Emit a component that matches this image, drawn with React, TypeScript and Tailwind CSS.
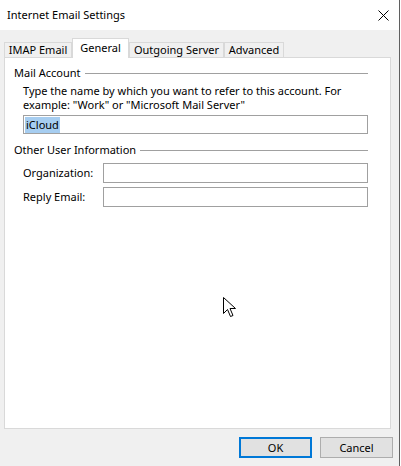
import React from "react";

const font = { fontFamily: '"Noto Sans", "Open Sans", sans-serif' };

function Tab({ label, width, active }: { label: string; width: string; active?: boolean }) {
  if (active) {
    return (
      <div
        className={`${width} h-[20px] -mb-px z-10 bg-white border border-b-0 border-[#d9d9d9] flex items-start justify-center pt-[1px] text-[11px] leading-[15px] text-black whitespace-nowrap`}
      >
        {label}
      </div>
    );
  }
  return (
    <div
      className={`${width} h-[15px] bg-[#f0f0f0] border border-b-0 border-[#d9d9d9] flex items-center justify-center text-[11px] leading-[14px] text-black whitespace-nowrap`}
    >
      {label}
    </div>
  );
}

function GroupHeader({ label }: { label: string }) {
  return (
    <div className="flex items-center h-[16px] pl-[9px] pr-[22px]">
      <span className="text-[11px] leading-[16px] text-black whitespace-nowrap">{label}</span>
      <div className="flex-1 ml-[4px] h-px bg-[#a0a0a0]" />
    </div>
  );
}

function Field({ label }: { label: string }) {
  return (
    <div className="flex items-center pl-[18px] pr-[22px]">
      <span className="w-[80px] text-[11px] leading-[14px] text-black whitespace-nowrap">{label}</span>
      <div className="flex-1 h-[20px] bg-white border border-[#a0a0a0]" />
    </div>
  );
}

export default function App() {
  return (
    <div className="w-[401px] h-[466px] flex bg-white overflow-hidden" style={font}>
      <div className="w-[399px] h-full flex flex-col bg-[#f0f0f0] relative">
        {/* title bar */}
        <div className="h-[30px] bg-white flex items-center justify-between pl-[7px] pr-[10px]">
          <span className="text-[11px] text-black whitespace-nowrap">Internet Email Settings</span>
          <svg width="11" height="11" viewBox="0 0 11 11">
            <path d="M0.5 0.5 L10.5 10.5 M10.5 0.5 L0.5 10.5" stroke="#000" strokeWidth="1" />
          </svg>
        </div>

        {/* tabs */}
        <div className="flex items-end pl-[4px] pt-[8px]">
          <Tab label="IMAP Email" width="w-[68px]" />
          <Tab label="General" width="w-[57px]" active />
          <Tab label="Outgoing Server" width="w-[95px]" />
          <Tab label="Advanced" width="w-[60px]" />
        </div>

        {/* panel */}
        <div className="ml-[4px] w-[387px] h-[372px] bg-white border border-[#d9d9d9] pt-[7px] flex flex-col">
          <GroupHeader label="Mail Account" />
          <div className="pl-[18px] pr-[22px] pt-[3px]">
            <p className="text-[11px] leading-[14px] text-black whitespace-nowrap">
              Type the name by which you want to refer to this account. For
              <br />
              example: "Work" or "Microsoft Mail Server"
            </p>
            <div className="mt-[3px] h-[19px] border border-[#a0a0a0] bg-white flex items-center px-[1px]">
              <span className="bg-[#a6cdf0] text-[11px] leading-[16px] text-black px-[1px]">iCloud</span>
            </div>
          </div>

          <div className="mt-[8px]">
            <GroupHeader label="Other User Information" />
          </div>
          <div className="mt-[5px] flex flex-col gap-[4px]">
            <Field label="Organization:" />
            <Field label="Reply Email:" />
          </div>
        </div>

        {/* buttons */}
        <div className="flex justify-end gap-[8px] pr-[6px] pt-[8px]">
          <button className="w-[73px] h-[21px] bg-[#e1e1e1] border-2 border-[#0078d7] text-[11px] text-black leading-none">
            OK
          </button>
          <button className="w-[73px] h-[21px] bg-[#e1e1e1] border border-[#adadad] text-[11px] text-black leading-none">
            Cancel
          </button>
        </div>

        {/* mouse pointer */}
        <svg
          width="14"
          height="21"
          viewBox="0 0 14 21"
          className="absolute left-[223px] top-[297px]"
        >
          <path
            d="M0.5 0.5 L0.5 16.5 L4.5 12.5 L7.5 19.5 L10 18.5 L7 11.5 L12.5 11.5 Z"
            fill="#fff"
            stroke="#000"
            strokeWidth="1"
          />
        </svg>
      </div>
      <div className="w-px h-full bg-[#5f5f5f]" />
      <div className="w-px h-full bg-white" />
    </div>
  );
}
